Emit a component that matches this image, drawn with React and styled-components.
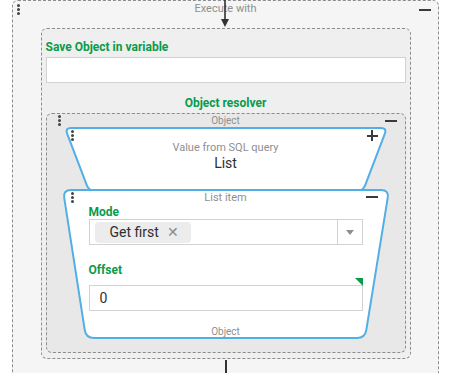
import React from "react";
import styled, { createGlobalStyle } from "styled-components";

const GlobalStyle = createGlobalStyle`
  * { box-sizing: border-box; }
  html, body { margin: 0; padding: 0; background: #ffffff; overflow: hidden; }
  body { font-family: Roboto, "Noto Sans", Arial, sans-serif; }
`;

const GREEN = "#0b9a4a";
const BLUE = "#52afe6";
const DASH = "#8c8c8c";

const Outer = styled.div`
  position: relative;
  width: 427px;
  margin-left: 12px;
  border: 1px dashed ${DASH};
  border-radius: 6px;
  background: #f5f5f5;
  padding-bottom: 40px;
`;

const Caption = styled.div`
  font-size: ${(p) => p.$size || 11}px;
  line-height: ${(p) => p.$lh || 15}px;
  height: ${(p) => p.$lh || 15}px;
  color: #8f8f8f;
  text-align: center;
  white-space: nowrap;
`;

const OuterHeader = styled(Caption)`
  height: 27px;
  line-height: 16px;
`;

const Arrow = styled.svg`
  position: absolute;
  left: 202px;
  top: -1px;
`;

const Dots = styled.div`
  position: absolute;
  left: ${(p) => p.$x}px;
  top: ${(p) => p.$y}px;
  display: flex;
  flex-direction: column;
  gap: 1px;
  z-index: 2;
  & > span {
    width: 3px;
    height: 3px;
    border-radius: 50%;
    background: #444;
  }
`;

const Minus = styled.div`
  position: absolute;
  right: ${(p) => p.$r}px;
  top: ${(p) => p.$t}px;
  width: 12px;
  height: 2px;
  background: #3a3a3a;
  z-index: 2;
`;

const Plus = styled.div`
  position: absolute;
  right: ${(p) => p.$r}px;
  top: ${(p) => p.$t}px;
  width: 11px;
  height: 11px;
  z-index: 2;
  &::before, &::after {
    content: "";
    position: absolute;
    background: #3a3a3a;
  }
  &::before { left: 0; top: 4.5px; width: 11px; height: 2px; }
  &::after { left: 4.5px; top: 0; width: 2px; height: 11px; }
`;

const SaveBox = styled.div`
  width: 370px;
  margin: 0 auto;
  border: 1px dashed ${DASH};
  border-radius: 6px;
  background: #efefef;
  padding: 11px 4px 5px;
`;

const Label = styled.div`
  font-size: 12px;
  font-weight: 700;
  line-height: ${(p) => p.$lh || 15}px;
  color: ${GREEN};
  text-align: ${(p) => (p.$center ? "center" : "left")};
  margin-top: ${(p) => p.$mt || 0}px;
  white-space: nowrap;
`;

const TextInput = styled.div`
  height: 26px;
  margin-top: ${(p) => p.$mt || 0}px;
  background: #fff;
  border: 1px solid #d2d2d2;
  font-size: 14px;
  line-height: 24px;
  color: #333;
  padding-left: 10px;
`;

const ObjectBox = styled.div`
  position: relative;
  margin-top: 2px;
  border: 1px dashed ${DASH};
  border-radius: 6px;
  background: #e8e8e8;
  padding-bottom: 13px;
`;

const ShapeWrap = styled.div`
  position: relative;
  width: ${(p) => p.$w}px;
  height: ${(p) => p.$h}px;
  margin: ${(p) => p.$mt || 0}px auto 0;
  z-index: ${(p) => p.$z || 0};
`;

const ShapeSvg = styled.svg`
  position: absolute;
  left: 0;
  top: 0;
  overflow: visible;
`;

const ShapeBody = styled.div`
  position: relative;
  height: 100%;
  display: flex;
  flex-direction: column;
  padding: ${(p) => p.$pad};
`;

const BigValue = styled.div`
  font-size: 14px;
  line-height: 16px;
  color: #2e2e2e;
  text-align: center;
`;

const SelectBox = styled.div`
  display: flex;
  height: 26px;
  background: #fff;
  border: 1px solid #d2d2d2;
`;

const TagArea = styled.div`
  flex: 1;
  display: flex;
  align-items: center;
  padding-left: 5px;
`;

const Tag = styled.div`
  display: flex;
  align-items: center;
  height: 21px;
  width: 96px;
  padding-left: 15px;
  background: #ececec;
  border-radius: 4px;
  font-size: 14px;
  color: #2e2e2e;
  gap: 8px;
`;

const TagX = styled.span`
  font-size: 14px;
  color: #8a8a8a;
`;

const Caret = styled.div`
  width: 25px;
  border-left: 1px solid #d2d2d2;
  display: flex;
  align-items: center;
  justify-content: center;
  &::after {
    content: "";
    border-left: 4.5px solid transparent;
    border-right: 4.5px solid transparent;
    border-top: 5px solid #8f8f8f;
  }
`;

const Field = styled.div`
  position: relative;
  padding-top: 8px;
`;

const Corner = styled.div`
  position: absolute;
  right: 0;
  top: 1px;
  width: 0;
  height: 0;
  border-top: 8px solid ${GREEN};
  border-left: 8px solid transparent;
`;

const Connector = styled.div`
  width: 2px;
  height: 30px;
  margin: 1px auto 0;
  background: #333;
`;

function roundedPath(pts, r) {
  const n = pts.length;
  let d = "";
  for (let i = 0; i < n; i++) {
    const p0 = pts[(i - 1 + n) % n];
    const p1 = pts[i];
    const p2 = pts[(i + 1) % n];
    const v1 = [p0[0] - p1[0], p0[1] - p1[1]];
    const v2 = [p2[0] - p1[0], p2[1] - p1[1]];
    const l1 = Math.hypot(v1[0], v1[1]);
    const l2 = Math.hypot(v2[0], v2[1]);
    const a = [p1[0] + (v1[0] / l1) * r, p1[1] + (v1[1] / l1) * r];
    const b = [p1[0] + (v2[0] / l2) * r, p1[1] + (v2[1] / l2) * r];
    d += `${i === 0 ? "M" : "L"} ${a[0]} ${a[1]} Q ${p1[0]} ${p1[1]} ${b[0]} ${b[1]} `;
  }
  return d + "Z";
}

function Shape({ w, h, pts, r }) {
  return (
    <ShapeSvg width={w} height={h} viewBox={`0 0 ${w} ${h}`}>
      <path d={roundedPath(pts, r)} fill="#fff" stroke={BLUE} strokeWidth="2" />
    </ShapeSvg>
  );
}

function DragDots({ x, y }) {
  return (
    <Dots $x={x} $y={y}>
      <span />
      <span />
      <span />
    </Dots>
  );
}

export default function App() {
  return (
    <>
      <GlobalStyle />
      <Outer>
        <DragDots x={4} y={3} />
        <Minus $r={7} $t={8} />
        <OuterHeader>Execute with</OuterHeader>
        <Arrow width="20" height="29" viewBox="0 0 20 29">
          <line x1="10" y1="0" x2="10" y2="22" stroke="#333" strokeWidth="1.6" />
          <polygon points="6,19 14,19 10,27" fill="#333" />
        </Arrow>
        <SaveBox>
          <Label>Save Object in variable</Label>
          <TextInput $mt={2} />
          <Label $center $mt={13}>Object resolver</Label>
          <ObjectBox>
            <DragDots x={11} y={1} />
            <Minus $r={8} $t={6} />
            <Caption $size={10} $lh={13}>Object</Caption>
            <ShapeWrap $w={324} $h={64}>
              <Shape w={324} h={64} r={6} pts={[[1, 1], [323, 1], [299, 64], [25, 64]]} />
              <DragDots x={7} y={3} />
              <Plus $r={10} $t={3} />
              <ShapeBody $pad="14px 0 0">
                <Caption $size={11} $lh={14}>Value from SQL query</Caption>
                <BigValue>List</BigValue>
              </ShapeBody>
            </ShapeWrap>
            <ShapeWrap $w={328} $h={150} $mt={-2} $z={1}>
              <Shape w={328} h={150} r={8} pts={[[1, 1], [327, 1], [303, 149], [24, 149]]} />
              <DragDots x={9} y={3} />
              <Minus $r={12} $t={7} />
              <ShapeBody $pad="1px 27px 0">
                <Caption $size={11} $lh={15}>List item</Caption>
                <Label $lh={14}>Mode</Label>
                <SelectBox>
                  <TagArea>
                    <Tag>
                      Get first <TagX>✕</TagX>
                    </Tag>
                  </TagArea>
                  <Caret />
                </SelectBox>
                <Label $lh={14} $mt={18}>Offset</Label>
                <Field>
                  <Corner />
                  <TextInput>0</TextInput>
                </Field>
                <Caption $size={10} $lh={14} style={{ marginTop: 14 }}>Object</Caption>
              </ShapeBody>
            </ShapeWrap>
          </ObjectBox>
        </SaveBox>
        <Connector />
      </Outer>
    </>
  );
}
